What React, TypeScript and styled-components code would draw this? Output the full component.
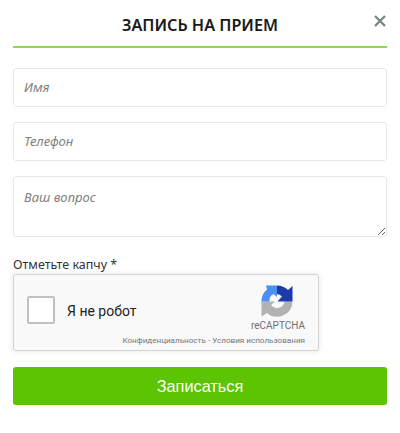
import React from "react";
import styled, { createGlobalStyle } from "styled-components";

const GlobalStyle = createGlobalStyle`
  html, body {
    margin: 0;
    padding: 0;
    background: #fff;
  }
`;

const Modal = styled.form`
  box-sizing: border-box;
  width: 400px;
  height: 433px;
  padding: 0 13px;
  display: flex;
  flex-direction: column;
  font-family: "Noto Sans", "Liberation Sans", sans-serif;
  background: #fff;
`;

const Header = styled.div`
  height: 46px;
  display: grid;
  grid-template-columns: 30px 1fr 30px;
  align-items: center;
  border-bottom: 2px solid #8dd85a;
`;

const Title = styled.h2`
  grid-column: 2;
  margin: 4px 0 0;
  text-align: center;
  font-size: 16.2px;
  font-weight: 600;
  color: #1a1a1a;
`;

const CloseIcon = styled.svg`
  justify-self: end;
  margin: 0 1px 5px 0;
  width: 12px;
  height: 12px;
`;

const Fields = styled.div`
  margin-top: 20px;
  display: flex;
  flex-direction: column;
  gap: 15px;
`;

const TextInput = styled.input`
  box-sizing: border-box;
  width: 100%;
  height: 39px;
  padding: 0 10px 1px;
  border: 1px solid #e6eaea;
  border-radius: 3px;
  outline: none;
  font-family: inherit;
  font-size: 13px;
  font-style: italic;
  &::placeholder {
    color: #808080;
    opacity: 1;
  }
`;

const TextArea = styled.textarea`
  display: block;
  box-sizing: border-box;
  width: 100%;
  height: 61px;
  padding: 11px 10px;
  border: 1px solid #e6eaea;
  border-radius: 3px;
  outline: none;
  font-family: inherit;
  font-size: 13px;
  font-style: italic;
  &::placeholder {
    color: #808080;
    opacity: 1;
  }
`;

const CaptchaLabel = styled.label`
  margin-top: 19px;
  height: 18px;
  line-height: 18px;
  font-size: 12.5px;
  color: #333;
`;

const Captcha = styled.div`
  box-sizing: border-box;
  width: 306px;
  height: 77px;
  padding: 0 13px;
  display: flex;
  flex-direction: column;
  background: #f9f9f9;
  border: 1px solid #d3d3d3;
  border-radius: 3px;
  box-shadow: 0 0 4px 1px rgba(0, 0, 0, 0.08);
  font-family: Roboto, "Liberation Sans", sans-serif;
`;

const CaptchaRow = styled.div`
  display: flex;
`;

const CheckBox = styled.div`
  box-sizing: border-box;
  flex: none;
  align-self: flex-start;
  margin-top: 21px;
  width: 28px;
  height: 28px;
  background: #fff;
  border: 2px solid #c1c1c1;
  border-radius: 2px;
`;

const CaptchaText = styled.span`
  margin: 28px 0 0 12px;
  font-size: 14px;
  line-height: 16px;
  white-space: nowrap;
  color: #222;
`;

const Brand = styled.div`
  margin-left: auto;
  display: flex;
  flex-direction: column;
  align-items: flex-end;
`;

const BrandLogo = styled.svg`
  margin: 10px 12px 0 0;
  width: 32px;
  height: 32px;
`;

const BrandName = styled.span`
  margin-top: 3px;
  font-size: 10px;
  line-height: 12px;
  color: #6f6f6f;
`;

const BrandLinks = styled.span`
  align-self: flex-end;
  margin-top: 4px;
  font-size: 8.1px;
  line-height: 9px;
  white-space: nowrap;
  color: #777;
`;

const Submit = styled.button`
  margin-top: 16px;
  height: 38px;
  border: none;
  border-radius: 3px;
  background: #5cc400;
  color: #fff;
  font-family: "Liberation Sans", Arial, sans-serif;
  font-size: 16.3px;
`;

function RecaptchaLogo() {
  return (
    <BrandLogo viewBox="0 0 32 32">
      <path d="M0.5 16.5 H14 L10 20 A7.5 7.5 0 0 0 23.5 16.5 H31.5 A15.5 15.5 0 0 1 6 28 L0.5 31.5 Z" fill="#b2b2b2" />
      <path d="M0.5 16.5 A15.5 15.5 0 0 1 6 4.5 L5 0.5 H16 V12 L12.5 9 A7.5 7.5 0 0 0 8.5 16.5 Z" fill="#4a90f5" />
      <path d="M16 0.5 A15.5 15.5 0 0 1 27 5 L31.5 1 V16.5 H16.5 L21 11.5 A7.5 7.5 0 0 0 16 9 Z" fill="#1c3aa9" />
    </BrandLogo>
  );
}

export default function App() {
  return (
    <>
      <GlobalStyle />
      <Modal>
        <Header>
          <Title>ЗАПИСЬ НА ПРИЕМ</Title>
          <CloseIcon viewBox="0 0 12 12">
            <path d="M1 1 L11 11 M11 1 L1 11" stroke="#7d8587" strokeWidth="2.4" fill="none" />
          </CloseIcon>
        </Header>
        <Fields>
          <TextInput placeholder="Имя" />
          <TextInput placeholder="Телефон" />
          <TextArea placeholder="Ваш вопрос" />
        </Fields>
        <CaptchaLabel>Отметьте капчу *</CaptchaLabel>
        <Captcha>
          <CaptchaRow>
            <CheckBox />
            <CaptchaText>Я не робот</CaptchaText>
            <Brand>
              <RecaptchaLogo />
              <BrandName>reCAPTCHA</BrandName>
            </Brand>
          </CaptchaRow>
          <BrandLinks>Конфиденциальность - Условия использования</BrandLinks>
        </Captcha>
        <Submit type="button">Записаться</Submit>
      </Modal>
    </>
  );
}
